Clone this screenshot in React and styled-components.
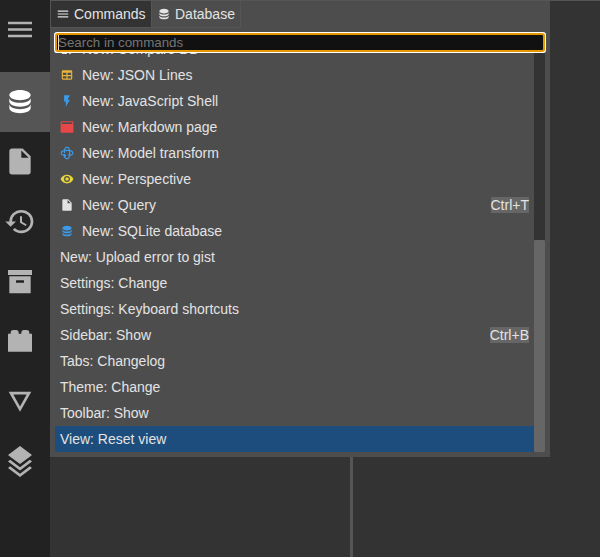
import React from "react";
import styled, { createGlobalStyle } from "styled-components";

const GlobalStyle = createGlobalStyle`
  * { box-sizing: border-box; }
  body {
    margin: 0;
    overflow: hidden;
    background: #333;
    color: #e3e3e3;
    font: 14px/normal "Liberation Sans", Arial, sans-serif;
  }
`;

const paths = {
  menu: "M3,6H21V8H3V6M3,11H21V13H3V11M3,16H21V18H3V16Z",
  database:
    "M12,3C7.58,3 4,4.79 4,7C4,9.21 7.58,11 12,11C16.42,11 20,9.21 20,7C20,4.79 16.42,3 12,3M4,9V12C4,14.21 7.58,16 12,16C16.42,16 20,14.21 20,12V9C20,11.21 16.42,13 12,13C7.58,13 4,11.21 4,9M4,14V17C4,19.21 7.58,21 12,21C16.42,21 20,19.21 20,17V14C20,16.21 16.42,18 12,18C7.58,18 4,16.21 4,14Z",
  file: "M13,9V3.5L18.5,9M6,2C4.89,2 4,2.89 4,4V20A2,2 0 0,0 6,22H18A2,2 0 0,0 20,20V8L14,2H6Z",
  history:
    "M13.5,8H12V13L16.28,15.54L17,14.33L13.5,12.25V8M13,3A9,9 0 0,0 4,12H1L4.96,16.03L9,12H6A7,7 0 0,1 13,5A7,7 0 0,1 20,12A7,7 0 0,1 13,19C11.07,19 9.32,18.21 8.06,16.94L6.64,18.36C8.27,20 10.5,21 13,21A9,9 0 0,0 22,12A9,9 0 0,0 13,3",
  archive:
    "M3,3H21V7H3V3M4,8H20V21H4V8M9.5,11A0.5,0.5 0 0,0 9,11.5V13H15V11.5A0.5,0.5 0 0,0 14.5,11H9.5Z",
  brick:
    "M19,6V5A2,2 0 0,0 17,3H15A2,2 0 0,0 13,5V6H11V5A2,2 0 0,0 9,3H7A2,2 0 0,0 5,5V6H3V20H21V6H19Z",
  triangle: "M3.5,4.5H20.5L12,20L3.5,4.5M7,6.5L12,15.8L17,6.5H7Z",
  layers:
    "M12,0L3,7L4.63,8.27L12,14L19.36,8.27L21,7L12,0M19.37,10.73L12,16.47L4.62,10.74L3,12L12,19L21,12L19.37,10.73M19.37,15.73L12,21.47L4.62,15.74L3,17L12,24L21,17L19.37,15.73Z",
  table:
    "M5,4H19A2,2 0 0,1 21,6V18A2,2 0 0,1 19,20H5A2,2 0 0,1 3,18V6A2,2 0 0,1 5,4M5,8V12H11V8H5M13,8V12H19V8H13M5,14V18H11V14H5M13,14V18H19V14H13Z",
  flash: "M7,2V13H10V22L17,10H13L17,2H7Z",
  window:
    "M21,2H3C1.9,2 1,2.9 1,4V20C1,21.1 1.9,22 3,22H21C22.1,22 23,21.1 23,20V4C23,2.9 22.1,2 21,2M21,7H3V4H21V7Z",
  eye: "M12,9A3,3 0 0,0 9,12A3,3 0 0,0 12,15A3,3 0 0,0 15,12A3,3 0 0,0 12,9M12,17A5,5 0 0,1 7,12A5,5 0 0,1 12,7A5,5 0 0,1 17,12A5,5 0 0,1 12,17M12,4.5C7,4.5 2.73,7.61 1,12C2.73,16.39 7,19.5 12,19.5C17,19.5 21.27,16.39 23,12C21.27,7.61 17,4.5 12,4.5Z",
  compare:
    "M3,4H10V6H5V18H12V20.5H5A2,2 0 0,1 3,18V4M14,4H19V16L21,18L17,21L14,18H17V6H14V4Z",
};

const Svg = styled.svg`
  display: block;
  flex: none;
  width: ${(p) => p.$width}px;
  height: ${(p) => p.$height}px;
  fill: currentColor;
  color: ${(p) => p.$color || "inherit"};
`;

function Icon({ name, width = 14, height = 14, color }) {
  return (
    <Svg viewBox="0 0 24 24" preserveAspectRatio="none" $width={width} $height={height} $color={color}>
      {name === "orbit" ? (
        <g fill="none" stroke="currentColor" strokeWidth="2">
          <path d="M15,16.5C19,16 22,14.2 22,12C22,9.5 17.5,7.5 12,7.5C6.500,7.5 2,9.500 2,12C2,14 5,15.800 9,16.400" />
          <path d="M7.500,15C8,19 9.800,22 12,22C14.500,22 16.500,17.500 16.500,12C16.500,6.500 14.500,2 12,2C9.500,2 7.500,6.500 7.500,12" />
          <path d="M6.500,13.500L9.500,16.500L6.500,19.500M14.500,13.500L17.500,16.500" />
        </g>
      ) : (
        <path fillRule="evenodd" d={paths[name]} />
      )}
    </Svg>
  );
}

const Screen = styled.div`
  display: flex;
  height: 557px;
  width: 600px;
`;

const WidgetBar = styled.nav`
  flex: none;
  width: 50px;
  background: #222;
`;

const WidgetButton = styled.div`
  display: flex;
  align-items: center;
  height: 60px;
  padding: 0 0 1px 4px;
  margin-bottom: ${(p) => (p.$menu ? 12 : 0)}px;
  color: ${(p) => (p.$selected ? "#fff" : "#b3b3b3")};
  background: ${(p) => (p.$selected ? "#555" : "transparent")};
`;

const Main = styled.main`
  position: relative;
  display: flex;
  flex: 1;
  border-top: 1px solid #555;
`;

const LeftPanel = styled.div`
  width: 303px;
  border-right: 3px solid #555;
`;

const Palette = styled.section`
  position: absolute;
  top: -1px;
  left: 0;
  display: flex;
  flex-direction: column;
  width: 500px;
  height: 457px;
  padding-bottom: 5px;
  background: #4d4d4d;
`;

const Tabs = styled.div`
  display: flex;
  flex: none;
  height: 28px;
  border-top: 1px solid #555;
`;

const Tab = styled.div`
  display: flex;
  align-items: center;
  gap: 4px;
  width: ${(p) => p.$width}px;
  padding-left: 5px;
  white-space: nowrap;
  border: 1px solid #555;
  border-top: 0;
  border-left-width: ${(p) => (p.$active ? 1 : 0)}px;
  background: ${(p) => (p.$active ? "#333" : "#4d4d4d")};
`;

const SearchInput = styled.input`
  position: relative;
  z-index: 1;
  flex: none;
  width: 486px;
  height: 15px;
  margin: 7px 0 0 7px;
  padding: 0 1px;
  border: 0;
  border-radius: 1px;
  color: #e3e3e3;
  background: #111 linear-gradient(#e3e3e3, #e3e3e3) 1px 0 / 1px 15px no-repeat;
  font: 13.333px/15px "Liberation Sans", Arial, sans-serif;
  outline: 0;
  box-shadow: 0 0 0 2px #e59700, 0 0 0 3px #fff;
  &::placeholder { color: #757575; opacity: 1; }
`;

const ListArea = styled.div`
  display: flex;
  flex: 1;
  min-height: 0;
  margin: 0 5px;
  overflow: hidden;
`;

const CommandList = styled.div`
  display: flex;
  flex: 1;
  flex-direction: column;
  justify-content: flex-end;
`;

const CommandRow = styled.div`
  display: flex;
  flex: none;
  align-items: center;
  justify-content: space-between;
  height: 26px;
  padding: 0 5px;
  background: ${(p) => (p.$selected ? "#1d4d7c" : "transparent")};
`;

const CommandLabel = styled.div`
  display: flex;
  align-items: center;
  gap: 8px;
`;

const Shortcut = styled.span`
  background: #666;
`;

const ScrollTrack = styled.div`
  display: flex;
  flex: none;
  align-items: flex-end;
  width: 11px;
  background: #333;
`;

const ScrollThumb = styled.div`
  width: 11px;
  height: 212px;
  border-radius: 1px;
  background: #666;
`;

const widgets = ["menu", "database", "file", "history", "archive", "brick", "triangle", "layers"];

const commands = [
  { text: "New: Compare DB", icon: "compare" },
  { text: "New: JSON Lines", icon: "table", color: "#e8b339" },
  { text: "New: JavaScript Shell", icon: "flash", color: "#3c9ae8" },
  { text: "New: Markdown page", icon: "window", color: "#e84749" },
  { text: "New: Model transform", icon: "orbit", color: "#3c9ae8" },
  { text: "New: Perspective", icon: "eye", color: "#e8d639" },
  { text: "New: Query", icon: "file", keys: "Ctrl+T" },
  { text: "New: SQLite database", icon: "database", color: "#3c9ae8" },
  { text: "New: Upload error to gist" },
  { text: "Settings: Change" },
  { text: "Settings: Keyboard shortcuts" },
  { text: "Sidebar: Show", keys: "Ctrl+B" },
  { text: "Tabs: Changelog" },
  { text: "Theme: Change" },
  { text: "Toolbar: Show" },
  { text: "View: Reset view", selected: true },
];

export default function App() {
  return (
    <Screen>
      <GlobalStyle />
      <WidgetBar>
        {widgets.map((name) => (
          <WidgetButton key={name} $menu={name === "menu"} $selected={name === "database"}>
            <Icon name={name} width={32} height={31} />
          </WidgetButton>
        ))}
      </WidgetBar>
      <Main>
        <LeftPanel />
        <Palette>
          <Tabs>
            <Tab $active $width={102}>
              <Icon name="menu" />
              Commands
            </Tab>
            <Tab $width={89}>
              <Icon name="database" />
              Database
            </Tab>
          </Tabs>
          <SearchInput placeholder="Search in commands" />
          <ListArea>
            <CommandList>
              {commands.map((c) => (
                <CommandRow key={c.text} $selected={c.selected}>
                  <CommandLabel>
                    {c.icon && <Icon name={c.icon} color={c.color} />}
                    {c.text}
                  </CommandLabel>
                  {c.keys && <Shortcut>{c.keys}</Shortcut>}
                </CommandRow>
              ))}
            </CommandList>
            <ScrollTrack>
              <ScrollThumb />
            </ScrollTrack>
          </ListArea>
        </Palette>
      </Main>
    </Screen>
  );
}
